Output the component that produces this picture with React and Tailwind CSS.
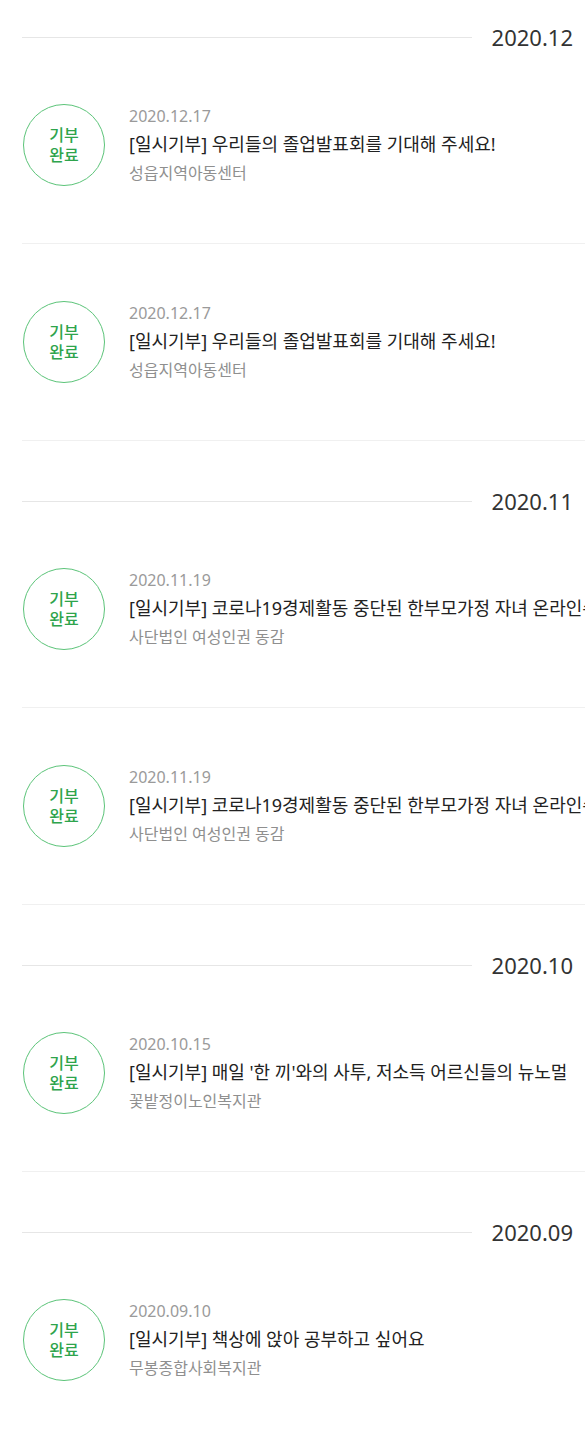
const groups = [
  {
    month: '2020.12',
    items: [
      { date: '2020.12.17', title: '[일시기부] 우리들의 졸업발표회를 기대해 주세요!', org: '성읍지역아동센터' },
      { date: '2020.12.17', title: '[일시기부] 우리들의 졸업발표회를 기대해 주세요!', org: '성읍지역아동센터' },
    ],
  },
  {
    month: '2020.11',
    items: [
      { date: '2020.11.19', title: '[일시기부] 코로나19경제활동 중단된 한부모가정 자녀 온라인수업 지원', org: '사단법인 여성인권 동감' },
      { date: '2020.11.19', title: '[일시기부] 코로나19경제활동 중단된 한부모가정 자녀 온라인수업 지원', org: '사단법인 여성인권 동감' },
    ],
  },
  {
    month: '2020.10',
    items: [
      { date: '2020.10.15', title: "[일시기부] 매일 '한 끼'와의 사투, 저소득 어르신들의 뉴노멀", org: '꽃밭정이노인복지관' },
    ],
  },
  {
    month: '2020.09',
    items: [
      { date: '2020.09.10', title: '[일시기부] 책상에 앉아 공부하고 싶어요', org: '무봉종합사회복지관' },
    ],
  },
];

function DonationItem({ item }) {
  return (
    <div className="flex h-[197px] items-center border-b border-[#f0f0f0]">
      {/* 완료 뱃지 */}
      <div className="ml-[1px] flex h-[82px] w-[82px] shrink-0 flex-col items-center justify-center rounded-full border border-[#5cc479] text-[16px] font-medium leading-[20px] text-[#2ea44c]">
        <span>기부</span>
        <span>완료</span>
      </div>
      <div className="ml-[24px] min-w-0 flex-1 whitespace-nowrap overflow-hidden">
        <p className="text-[16px] leading-[28px] text-[#9a9a9a]">{item.date}</p>
        <p className="text-[18px] leading-[29px] text-[#222]">{item.title}</p>
        <p className="text-[16px] leading-[29px] text-[#8f8f8f]">{item.org}</p>
      </div>
    </div>
  );
}

export default function App() {
  return (
    <div className="w-[585px] overflow-hidden bg-white pl-[22px] font-['Noto_Sans','Noto_Sans_CJK_KR',sans-serif]">
      {groups.map((group, i) => (
        <section key={group.month} className={i === 0 ? '' : 'pt-[23px]'}>
          {/* 월 구분선 */}
          <div className="flex h-[47px] items-start pr-[12px]">
            <div className="mt-[37px] h-px flex-1 bg-[#e6e6e6]" />
            <span className="ml-[20px] mt-[22px] text-[22px] leading-[30px] text-[#333]">{group.month}</span>
          </div>
          {group.items.map((item, j) => (
            <DonationItem key={j} item={item} />
          ))}
        </section>
      ))}
    </div>
  );
}
